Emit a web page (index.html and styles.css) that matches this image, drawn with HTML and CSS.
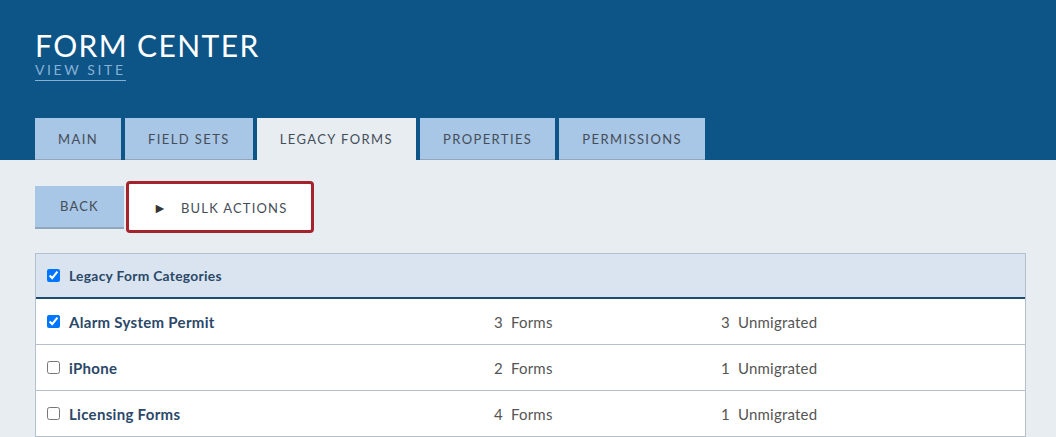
FILE: index.html
```html
<!DOCTYPE html>
<html lang="en">
<head>
    <meta charset="UTF-8">
    <title>Form Center</title>
    <link rel="stylesheet" href="styles.css">
</head>
<body>
    <header class="page-header">
        <h1 class="title">FORM CENTER</h1>
        <a class="view-site" href="#">VIEW SITE</a>
        <nav class="tabs">
            <a class="tab" href="#">MAIN</a>
            <a class="tab" href="#">FIELD SETS</a>
            <a class="tab active" href="#">LEGACY FORMS</a>
            <a class="tab" href="#">PROPERTIES</a>
            <a class="tab" href="#">PERMISSIONS</a>
        </nav>
    </header>

    <main class="content">
        <div class="toolbar">
            <button class="btn back">BACK</button>
            <button class="btn bulk"><span class="arrow">&#9658;</span>BULK ACTIONS</button>
        </div>

        <div class="list">
            <div class="list-head">
                <label class="name"><input type="checkbox" checked> Legacy Form Categories</label>
            </div>
            <div class="row">
                <label class="name"><input type="checkbox" checked> Alarm System Permit</label>
                <span class="count">3&nbsp; Forms</span>
                <span class="count">3&nbsp; Unmigrated</span>
            </div>
            <div class="row">
                <label class="name"><input type="checkbox"> iPhone</label>
                <span class="count">2&nbsp; Forms</span>
                <span class="count">1&nbsp; Unmigrated</span>
            </div>
            <div class="row">
                <label class="name"><input type="checkbox"> Licensing Forms</label>
                <span class="count">4&nbsp; Forms</span>
                <span class="count">1&nbsp; Unmigrated</span>
            </div>
        </div>
    </main>
</body>
</html>
```

FILE: styles.css
```css
body {
    margin: 0;
    font-family: Lato, "Open Sans", sans-serif;
    background: #e8edf2;
    color: #333;
}
.page-header {
    background: #0d5487;
    height: 160px;
    padding: 28px 35px 0;
    box-sizing: border-box;
    display: flex;
    flex-direction: column;
    align-items: flex-start;
}
.title {
    margin: 0;
    color: #fff;
    font-size: 30px;
    font-weight: 400;
    letter-spacing: 1.4px;
    line-height: 34px;
}
.view-site {
    color: #86b0d6;
    font-size: 14px;
    letter-spacing: 2.6px;
    text-decoration: none;
    line-height: 16px;
    border-bottom: 1px solid #86b0d6;
    padding-bottom: 2px;
}
.tabs {
    display: flex;
    gap: 4px;
    margin-top: auto;
}
.tab {
    background: #a8c6e5;
    color: #454d58;
    font-size: 13px;
    letter-spacing: 1.4px;
    text-decoration: none;
    height: 42px;
    line-height: 42px;
    padding: 0 23px;
    box-sizing: border-box;
    border-bottom: 1px solid #8fa6bd;
}
.tab.active {
    background: #e8edf2;
    border-bottom-color: #e8edf2;
}
.content {
    padding: 21px 30px 0 35px;
}
.toolbar {
    display: flex;
    align-items: center;
    gap: 2px;
}
.btn {
    font-family: inherit;
    font-size: 13px;
    letter-spacing: 1.2px;
    color: #454d58;
    cursor: pointer;
}
.back {
    background: #a8c6e5;
    border: none;
    border-bottom: 2px solid #8fa6bd;
    height: 43px;
    padding: 0 25px;
}
.bulk {
    background: #fff;
    border: 3px solid #a4232d;
    border-radius: 4px;
    height: 52px;
    padding: 0 23px 0 24px;
}
.arrow {
    font-size: 14px;
    margin-right: 13px;
    color: #333;
}
.list {
    margin-top: 20px;
    border: 1px solid #b4c0cc;
    border-bottom: none;
}
.list-head {
    background: #d9e4f0;
    height: 43px;
    display: flex;
    align-items: center;
    border-bottom: 2px solid #1b4d6d;
    padding-left: 11px;
}
.list-head .name {
    font-size: 13.8px;
}
.row {
    background: #fff;
    height: 45px;
    border-bottom: 1px solid #b4c0cc;
    display: grid;
    grid-template-columns: 447px 227px 1fr;
    align-items: center;
    padding-left: 11px;
}
.name {
    display: flex;
    align-items: center;
    color: #2b4868;
    font-weight: 700;
    font-size: 15px;
    letter-spacing: 0.3px;
}
.name input {
    margin: 0 9px 0 0;
    width: 13px;
    height: 13px;
}
.count {
    color: #555;
    font-size: 15px;
    letter-spacing: 0.2px;
}
```
